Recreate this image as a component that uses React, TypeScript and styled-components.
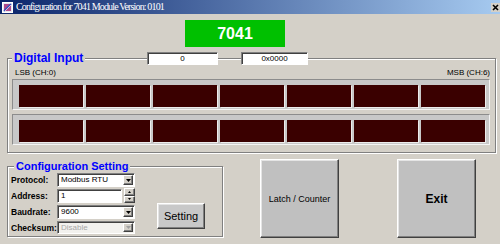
import React from 'react';
import styled, { createGlobalStyle } from 'styled-components';

const Global = createGlobalStyle`
  html, body { margin: 0; padding: 0; background: #d4d0c8; }
  body { font-family: "Liberation Sans", Arial, sans-serif; }
  #root { width: 500px; height: 244px; }
`;

const Window = styled.div`
  width: 500px;
  height: 244px;
  overflow: hidden;
  background: #d4d0c8;
  display: flex;
  flex-direction: column;
`;

const TitleBar = styled.div`
  flex: none;
  height: 14px;
  display: flex;
  align-items: center;
  padding: 0 0 0 2px;
  background: linear-gradient(to right, #0a246a 0%, #a6caf0 100%);
`;

const TitleText = styled.span`
  margin-left: 3px;
  color: #fff;
  font-family: "Liberation Serif", "Times New Roman", serif;
  font-size: 10px;
  letter-spacing: -0.85px;
  line-height: 14px;
  white-space: nowrap;
`;

const CloseBox = styled.div`
  margin-left: auto;
  width: 9px;
  height: 9px;
  margin-right: 0;
  background: #d4d0c8;
  display: flex;
  align-items: center;
  justify-content: center;
`;

const ModelBadge = styled.div`
  margin: 6px 0 0 185px;
  width: 100px;
  height: 27px;
  background: #00c000;
  color: #fff;
  font-weight: bold;
  font-size: 16px;
  display: flex;
  align-items: center;
  justify-content: center;
`;

const GroupFrame = styled.div<{ $w: number; $h?: number }>`
  box-sizing: border-box;
  width: ${(p) => p.$w}px;
  ${(p) => (p.$h ? `height: ${p.$h}px;` : '')}
  border: 1px solid #808080;
  box-shadow: inset 1px 1px 0 #fff, 1px 1px 0 #fff;
`;

const DigitalFrame = styled(GroupFrame)`
  margin: 11px 0 0 7px;
  padding: 0 5px 7px 4px;
`;

const DigitalHeader = styled.div`
  margin-top: -8px;
  height: 14px;
  display: grid;
  grid-template-columns: 135px 71px 23px 67px;
  align-items: center;
`;

const Legend = styled.span<{ $size: number }>`
  justify-self: start;
  padding: 0 2px;
  background: #d4d0c8;
  color: #0000ff;
  font-weight: bold;
  font-size: ${(p) => p.$size}px;
  line-height: 12px;
  white-space: nowrap;
`;

const ValueBox = styled.div`
  box-sizing: border-box;
  height: 13px;
  background: #fff;
  border: 1px solid;
  border-color: #808080 #fff #fff #808080;
  box-shadow: inset 1px 1px 0 #404040;
  font-size: 8px;
  line-height: 11px;
  text-align: center;
  color: #000;
`;

const ChannelRow = styled.div`
  margin: 3px 0 1px;
  padding: 0 0 0 3px;
  height: 10px;
  display: flex;
  justify-content: space-between;
  font-size: 8px;
  line-height: 10px;
  color: #000;
`;

const LedPanel = styled.div<{ $top?: number }>`
  box-sizing: border-box;
  margin-top: ${(p) => p.$top ?? 0}px;
  height: 31px;
  display: flex;
  gap: 3px;
  padding: 5px 4px 2px 6px;
  border: 1px solid;
  border-color: #8c8c8c #f4f4f4 #f4f4f4 #8c8c8c;
  background: #c8c8c8;
`;

const Led = styled.div`
  flex: 1;
  background: #3a0000;
  box-shadow: 1px 1px 0 #ececec;
`;

const BottomRow = styled.div`
  margin-top: 6px;
  padding-left: 7px;
  display: flex;
  align-items: flex-start;
`;

const ConfigFrame = styled(GroupFrame)`
  margin-top: 7px;
  padding: 0 0 0 2px;
`;

const ConfigHeader = styled.div`
  margin-top: -7px;
  height: 12px;
  display: flex;
  align-items: center;
  padding-left: 4px;
`;

const ConfigBody = styled.div`
  margin-top: 1px;
  padding-left: 1px;
  display: flex;
  align-items: flex-start;
`;

const FieldGrid = styled.div`
  display: grid;
  grid-template-columns: 46px 78px;
  grid-template-rows: 14px 14px 14px 13px;
  row-gap: 2px;
`;

const FieldLabel = styled.span`
  display: flex;
  align-items: center;
  font-weight: bold;
  font-size: 8.5px;
  color: #000;
  white-space: nowrap;
`;

const Combo = styled.div<{ $disabled?: boolean }>`
  box-sizing: border-box;
  height: 100%;
  display: flex;
  align-items: stretch;
  border: 1px solid;
  border-color: #808080 #fff #fff #808080;
  box-shadow: inset 1px 1px 0 #404040;
  background: ${(p) => (p.$disabled ? '#f2f1ee' : '#fff')};
  padding: 1px 1px 1px 1px;
`;

const ComboText = styled.span<{ $disabled?: boolean }>`
  flex: 1;
  padding-left: 2px;
  font-size: 8px;
  line-height: 10px;
  color: ${(p) => (p.$disabled ? '#a8a8a8' : '#000')};
  white-space: nowrap;
  overflow: hidden;
`;

const ArrowButton = styled.div`
  box-sizing: border-box;
  width: 10px;
  display: flex;
  align-items: center;
  justify-content: center;
  background: #d4d0c8;
  border: 1px solid;
  border-color: #fff #404040 #404040 #fff;
  box-shadow: inset -1px -1px 0 #808080;
`;

const SpinRow = styled.div`
  display: flex;
  gap: 2px;
  align-items: center;
`;

const EditBox = styled(Combo)`
  flex: 1;
  height: 14px;
`;

const Spinner = styled.div`
  display: flex;
  flex-direction: column;
  width: 11px;
  height: 15px;
  margin-top: -1px;
`;

const SpinHalf = styled(ArrowButton)`
  width: 11px;
  flex: 1;
`;

const SmallButton = styled.div`
  box-sizing: border-box;
  margin: 30px 0 0 22px;
  width: 48px;
  height: 26px;
  display: flex;
  align-items: center;
  justify-content: center;
  background: #c8c8c8;
  border: 1px solid;
  border-color: #fff #404040 #404040 #fff;
  box-shadow: inset -1px -1px 0 #808080, inset 1px 1px 0 #e4e4e4;
  font-size: 11px;
  color: #000;
`;

const BigButton = styled.div<{ $left: number; $bold?: boolean }>`
  box-sizing: border-box;
  margin-left: ${(p) => p.$left}px;
  width: 79px;
  height: 79px;
  display: flex;
  align-items: center;
  justify-content: center;
  background: #c0c0c0;
  border: 1px solid;
  border-color: #fff #404040 #404040 #fff;
  box-shadow: inset -1px -1px 0 #808080, inset 1px 1px 0 #e4e4e4;
  font-size: ${(p) => (p.$bold ? 12 : 9)}px;
  font-weight: ${(p) => (p.$bold ? 'bold' : 'normal')};
  color: #000;
  white-space: nowrap;
`;

const DownArrow = ({ color = '#000' }: { color?: string }) => (
  <svg width="5" height="3" viewBox="0 0 5 3">
    <path d="M0 0 H5 L2.5 3 Z" fill={color} />
  </svg>
);

const UpArrow = () => (
  <svg width="3" height="2" viewBox="0 0 3 2">
    <path d="M0 2 H3 L1.5 0 Z" fill="#000" />
  </svg>
);

const SmallDown = () => (
  <svg width="3" height="2" viewBox="0 0 3 2">
    <path d="M0 0 H3 L1.5 2 Z" fill="#000" />
  </svg>
);

const AppIcon = () => (
  <svg width="11" height="11" viewBox="0 0 11 11">
    <rect x="0.5" y="0.5" width="10" height="10" fill="#e8e8f0" stroke="#ffffff" />
    <rect x="2" y="2" width="7" height="7" fill="#b04a8c" />
    <path d="M2 9 L9 2" stroke="#3050c0" strokeWidth="1.6" />
    <path d="M3 9 L9 3" stroke="#f0d0e0" strokeWidth="0.8" />
  </svg>
);

const CloseIcon = () => (
  <svg width="7" height="7" viewBox="0 0 7 7">
    <path d="M1 1 L6 6 M6 1 L1 6" stroke="#000" strokeWidth="1.6" />
  </svg>
);

const ledRows = [0, 1];
const leds = [0, 1, 2, 3, 4, 5, 6];

export default function App() {
  return (
    <>
      <Global />
      <Window>
        <TitleBar>
          <AppIcon />
          <TitleText>Configuration for 7041 Module Version: 0101</TitleText>
          <CloseBox>
            <CloseIcon />
          </CloseBox>
        </TitleBar>

        <ModelBadge>7041</ModelBadge>

        <DigitalFrame $w={489}>
          <DigitalHeader>
            <Legend $size={12}>Digital Input</Legend>
            <ValueBox>0</ValueBox>
            <span />
            <ValueBox>0x0000</ValueBox>
          </DigitalHeader>
          <ChannelRow>
            <span>LSB (CH:0)</span>
            <span>MSB (CH:6)</span>
          </ChannelRow>
          {ledRows.map((r) => (
            <LedPanel key={r} $top={r === 0 ? 0 : 4}>
              {leds.map((i) => (
                <Led key={i} />
              ))}
            </LedPanel>
          ))}
        </DigitalFrame>

        <BottomRow>
          <ConfigFrame $w={216} $h={71}>
            <ConfigHeader>
              <Legend $size={11}>Configuration Setting</Legend>
            </ConfigHeader>
            <ConfigBody>
              <FieldGrid>
                <FieldLabel>Protocol:</FieldLabel>
                <Combo>
                  <ComboText>Modbus RTU</ComboText>
                  <ArrowButton>
                    <DownArrow />
                  </ArrowButton>
                </Combo>

                <FieldLabel>Address:</FieldLabel>
                <SpinRow>
                  <EditBox>
                    <ComboText>1</ComboText>
                  </EditBox>
                  <Spinner>
                    <SpinHalf>
                      <UpArrow />
                    </SpinHalf>
                    <SpinHalf>
                      <SmallDown />
                    </SpinHalf>
                  </Spinner>
                </SpinRow>

                <FieldLabel>Baudrate:</FieldLabel>
                <Combo>
                  <ComboText>9600</ComboText>
                  <ArrowButton>
                    <DownArrow />
                  </ArrowButton>
                </Combo>

                <FieldLabel>Checksum:</FieldLabel>
                <Combo $disabled>
                  <ComboText $disabled>Disable</ComboText>
                  <ArrowButton>
                    <DownArrow color="#a0a0a0" />
                  </ArrowButton>
                </Combo>
              </FieldGrid>
              <SmallButton>Setting</SmallButton>
            </ConfigBody>
          </ConfigFrame>

          <BigButton $left={37}>Latch / Counter</BigButton>
          <BigButton $left={58} $bold>
            Exit
          </BigButton>
        </BottomRow>
      </Window>
    </>
  );
}
